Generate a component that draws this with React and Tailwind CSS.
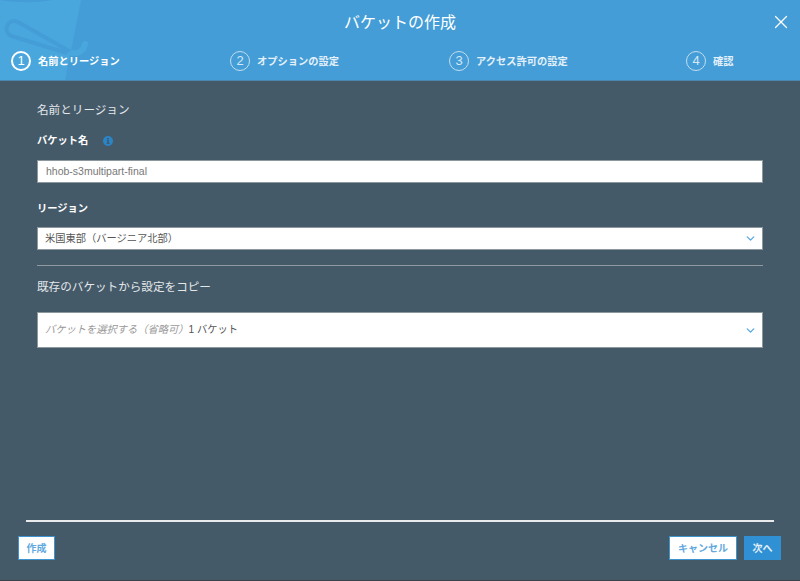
import { X, ChevronDown } from "lucide-react";

const steps = [
    { n: 1, label: "名前とリージョン", active: true, width: "w-[219px]" },
    { n: 2, label: "オプションの設定", width: "w-[219px]" },
    { n: 3, label: "アクセス許可の設定", width: "w-[237px]" },
    { n: 4, label: "確認", width: "" },
];

const Select = ({ height, children }) => (
    <div className={`flex items-center justify-between bg-white border border-[#8d979e] pl-[7px] pr-[5px] ${height}`}>
        <span className="text-[10.25px] text-[#555]">{children}</span>
        <ChevronDown className="w-[13px] h-[13px] text-[#5aa9e2]" strokeWidth={2.5} />
    </div>
);

const App = () => {
    return (
        <div className="w-[800px] h-[581px] flex flex-col bg-[#455a69] border-b border-[#3a4148] overflow-hidden font-['Liberation_Sans','Noto_Sans_CJK_JP',sans-serif]">
            {/* Header */}
            <div className="relative h-[81px] bg-[#449dd6] border-b border-[#4a86ad] shrink-0 overflow-hidden">
                <svg className="absolute left-0 top-0" width="95" height="81" viewBox="0 0 95 81" fill="none">
                    <path d="M0 0H81L65 81H0Z" fill="#49a7dd" />
                    <path d="M0 0H52C40 3 15 3 0 0Z" fill="#449dd6" />
                    <path d="M71 52L18 22C8 17 2 31 11 36L67 53" stroke="#449dd6" strokeWidth="4" />
                    <path d="M72 53C78 54 84 51 85 44" stroke="#49a7dd" strokeWidth="6" strokeLinecap="round" />
                </svg>
                <div className="relative text-center text-white text-[16px] pt-[13px] leading-5">バケットの作成</div>
                <X className="absolute right-[8px] top-[11px] w-[22px] h-[22px] text-white" strokeWidth={1.3} />
                <div className="absolute left-[11px] top-[51px] flex">
                    {steps.map((s) => (
                        <div key={s.n} className={`flex items-center gap-[7px] ${s.width}`}>
                            <span className={`w-[20px] h-[20px] rounded-full flex items-center justify-center text-[13px] ${s.active ? "border-2 border-white text-white" : "border border-[#c3def0] text-[#d5e8f5]"}`}>
                                {s.n}
                            </span>
                            <span className={`text-[10.25px] font-bold pt-[1px] ${s.active ? "text-white" : "text-[#e3f0f9]"}`}>{s.label}</span>
                        </div>
                    ))}
                </div>
            </div>

            {/* Form */}
            <div className="flex-1 flex flex-col px-[37px] pt-[21px]">
                <div className="text-[11.6px] leading-4 text-[#e4e8eb]">名前とリージョン</div>
                <div className="flex items-center mt-[15px] h-4">
                    <span className="text-[10.25px] font-bold text-white">バケット名</span>
                    <svg className="ml-[15px]" width="10" height="10" viewBox="0 0 10 10">
                        <circle cx="5" cy="5" r="5" fill="#2a85c8" />
                        <path d="M4 2h2v1.4H4zM3.6 4.2H6v3h.7v.9H3.4v-.9h.9V5.1h-.7z" fill="#455a69" />
                    </svg>
                </div>
                <div className="mt-[11px] h-[23px] flex items-center bg-white border border-[#8d979e] pl-[8px] text-[10.5px] text-[#777]">
                    hhob-s3multipart-final
                </div>
                <div className="mt-[18px] h-4 flex items-center text-[10.25px] font-bold text-white">リージョン</div>
                <div className="mt-[10px]">
                    <Select height="h-[23px]">米国東部（バージニア北部）</Select>
                </div>
                <div className="mt-[15px] h-px bg-[#8f999f]" />
                <div className="mt-[13px] text-[11.6px] leading-4 text-[#e4e8eb]">既存のバケットから設定をコピー</div>
                <div className="mt-[17px]">
                    <Select height="h-[36px]">
                        <span className="italic text-[#999]">バケットを選択する（省略可）</span>1 バケット
                    </Select>
                </div>
            </div>

            {/* Footer */}
            <div className="shrink-0 pl-[18px] pr-[19px] pb-[20px]">
                <div className="ml-[8px] mr-[7px] h-[2px] bg-[#e8eaec]" />
                <div className="flex items-center justify-between mt-[14px]">
                    <button className="w-[37px] h-[24px] bg-white border border-[#3f94d0] text-[10px] font-bold text-[#62a9df]">作成</button>
                    <div className="flex gap-[7px]">
                        <button className="w-[68px] h-[24px] bg-white border border-[#3f94d0] text-[10px] font-bold text-[#62a9df]">キャンセル</button>
                        <button className="w-[37px] h-[24px] bg-[#2f90d4] text-[10px] font-bold text-[#e3f0f9]">次へ</button>
                    </div>
                </div>
            </div>
        </div>
    );
};

export default App;
